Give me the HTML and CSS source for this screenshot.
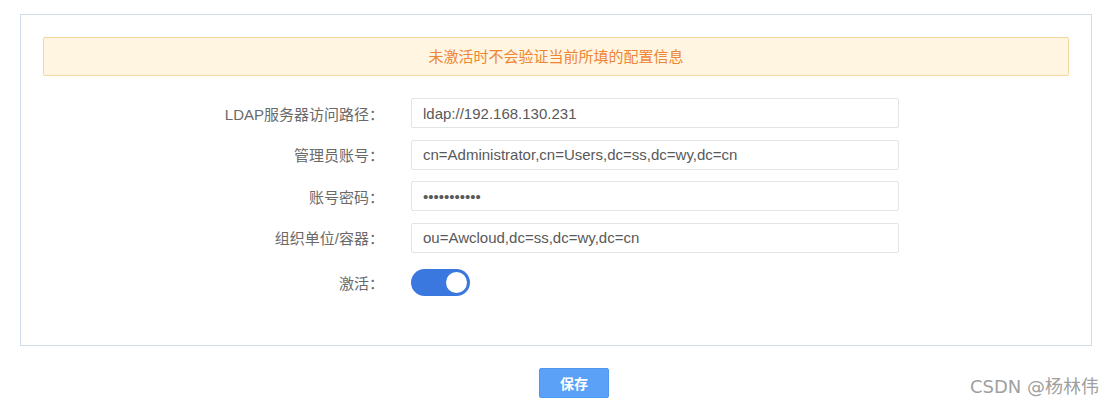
FILE: index.html
```html
<!DOCTYPE html>
<html lang="zh-CN">
<head>
    <meta charset="UTF-8">
    <title>LDAP 配置</title>
    <link rel="stylesheet" href="styles.css">
</head>
<body>
    <div class="panel">
        <div class="alert">未激活时不会验证当前所填的配置信息</div>

        <form class="ldap-form">
            <label class="form-label" for="ldapUrl">LDAP服务器访问路径：</label>
            <input class="form-input" id="ldapUrl" type="text" value="ldap://192.168.130.231">

            <label class="form-label" for="adminDn">管理员账号：</label>
            <input class="form-input" id="adminDn" type="text" value="cn=Administrator,cn=Users,dc=ss,dc=wy,dc=cn">

            <label class="form-label" for="adminPwd">账号密码：</label>
            <input class="form-input" id="adminPwd" type="text" value="•••••••••••">

            <label class="form-label" for="baseOu">组织单位/容器：</label>
            <input class="form-input" id="baseOu" type="text" value="ou=Awcloud,dc=ss,dc=wy,dc=cn">

            <span class="form-label toggle-label">激活：</span>
            <div class="toggle-cell">
                <button type="button" class="switch is-on" id="activeSwitch"><span class="switch-knob"></span></button>
            </div>
        </form>
    </div>

    <div class="actions">
        <button type="button" class="btn-save">保存</button>
    </div>

    <div class="watermark">CSDN @杨林伟</div>

    <script>
        // toggle switch
        const activeSwitch = document.getElementById('activeSwitch');
        activeSwitch.addEventListener('click', function() {
            this.classList.toggle('is-on');
        });
    </script>
</body>
</html>
```

FILE: styles.css
```css
body {
    margin: 0;
    padding: 14px 0 0 20px;
    font-family: 'Liberation Sans', Arial, 'Noto Sans CJK SC', sans-serif;
    color: #606266;
    background-color: #fff;
    position: relative;
    height: 396px;
}

.panel {
    width: 1070px;
    height: 330px;
    box-sizing: content-box;
    border: 1px solid #cfdbe8;
    padding: 0;
}

.alert {
    margin: 22px 22px 0 22px;
    height: 37px;
    line-height: 37px;
    background-color: #fff5e1;
    border: 1px solid #f2d79f;
    border-radius: 2px;
    color: #ef8633;
    font-size: 15px;
    text-align: center;
}

.ldap-form {
    display: grid;
    grid-template-columns: 341px 488px;
    column-gap: 27px;
    row-gap: 11.5px;
    margin: 22px 0 0 22px;
    align-items: center;
}

.form-label {
    text-align: right;
    font-size: 15px;
    color: #6a6a6a;
}

.form-input {
    height: 30px;
    box-sizing: border-box;
    border: 1px solid #e4e4e4;
    border-radius: 2px;
    padding: 0 11px;
    font-family: 'Liberation Sans', Arial, sans-serif;
    font-size: 15px;
    color: #595959;
    outline: none;
}

.toggle-label {
    margin-top: 4px;
}

.toggle-cell {
    margin-top: 5px;
    height: 27px;
}

.switch {
    position: relative;
    width: 59px;
    height: 27px;
    border: none;
    border-radius: 14px;
    background-color: #c8ccd4;
    padding: 0;
    cursor: pointer;
}

.switch.is-on {
    background-color: #3a78df;
}

.switch-knob {
    position: absolute;
    top: 3px;
    left: 3px;
    width: 21px;
    height: 21px;
    border-radius: 50%;
    background-color: #fff;
    transition: left 0.2s;
}

.switch.is-on .switch-knob {
    left: 35px;
}

.actions {
    padding: 22px 0 0 519px;
}

.btn-save {
    width: 70px;
    height: 30px;
    border: 1px solid #4f98f0;
    border-radius: 2px;
    background-color: #5aa1f7;
    color: #fff;
    font-family: 'Noto Sans CJK SC', sans-serif;
    font-size: 14px;
    font-weight: bold;
    cursor: pointer;
}

.watermark {
    position: absolute;
    right: 15px;
    top: 372px;
    font-family: 'DejaVu Sans', 'Noto Sans CJK SC', sans-serif;
    font-size: 18px;
    color: #a0a0a0;
    text-shadow: 0 0 1px #fff;
}
```
